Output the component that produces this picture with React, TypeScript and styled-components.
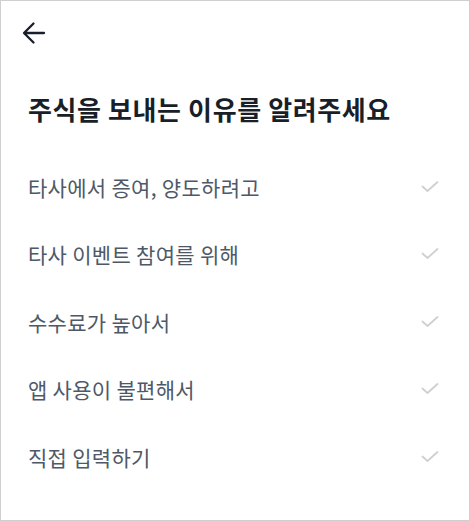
import React from "react";
import styled, { createGlobalStyle } from "styled-components";

const GlobalStyle = createGlobalStyle`
  html, body {
    margin: 0;
    padding: 0;
    background: #ffffff;
  }
  body {
    font-family: "Noto Sans CJK KR", "Noto Sans", sans-serif;
  }
`;

const Screen = styled.div`
  box-sizing: border-box;
  width: 470px;
  height: 521px;
  border: 1px solid #cfcfcf;
  background: #fff;
  display: flex;
  flex-direction: column;
`;

const TopBar = styled.div`
  height: 64px;
  display: flex;
  align-items: center;
  padding-left: 21px;
`;

const BackButton = styled.button`
  border: 0;
  background: none;
  padding: 0;
  width: 24px;
  height: 24px;
  display: flex;
  align-items: center;
  justify-content: center;
  color: #191f28;
  cursor: pointer;
`;

const Title = styled.h1`
  margin: 26px 0 26px;
  padding-left: 27px;
  font-size: 26px;
  font-weight: 700;
  color: #191f28;
  letter-spacing: 0.6px;
  line-height: 36px;
`;

const List = styled.ul`
  list-style: none;
  margin: 0;
  padding: 0;
`;

const Item = styled.li`
  height: 67.5px;
  display: flex;
  align-items: center;
  justify-content: space-between;
  padding: 0 30px 0 27px;
  font-size: 21px;
  color: #4e5968;
  letter-spacing: 0.3px;
`;

const Check = styled.svg`
  width: 18px;
  height: 18px;
  color: #cdd0d4;
`;

const reasons = [
  "타사에서 증여, 양도하려고",
  "타사 이벤트 참여를 위해",
  "수수료가 높아서",
  "앱 사용이 불편해서",
  "직접 입력하기",
];

export default function App() {
  return (
    <>
      <GlobalStyle />
      <Screen>
        <TopBar>
          <BackButton aria-label="뒤로">
            <svg width="24" height="24" viewBox="0 0 24 24" fill="none">
              <path
                d="M22 12H2.5M11.5 2.5L2 12l9.5 9.5"
                stroke="currentColor"
                strokeWidth="2.3"
                strokeLinecap="round"
                strokeLinejoin="round"
              />
            </svg>
          </BackButton>
        </TopBar>
        <Title>주식을 보내는 이유를 알려주세요</Title>
        <List>
          {reasons.map((r) => (
            <Item key={r}>
              <span>{r}</span>
              <Check viewBox="0 0 18 18" fill="none">
                <path
                  d="M1.5 8.5l5 4.5L16.5 4"
                  stroke="currentColor"
                  strokeWidth="1.8"
                  strokeLinecap="round"
                  strokeLinejoin="round"
                />
              </Check>
            </Item>
          ))}
        </List>
      </Screen>
    </>
  );
}
